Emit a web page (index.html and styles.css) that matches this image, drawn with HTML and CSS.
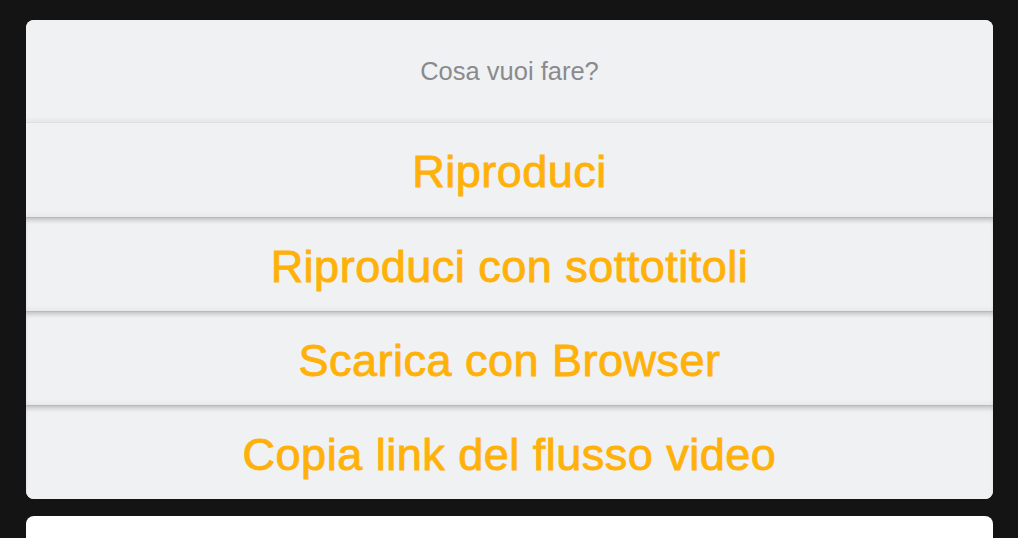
FILE: index.html
```html
<!DOCTYPE html>
<html lang="it">
<head>
  <meta charset="UTF-8">
  <title>Azioni video</title>
  <link rel="stylesheet" href="styles.css">
</head>
<body>

  <!-- Foglio azioni -->
  <div class="action-sheet">
    <div class="sheet-title">Cosa vuoi fare?</div>
    <button class="sheet-btn">Riproduci</button>
    <button class="sheet-btn">Riproduci con sottotitoli</button>
    <button class="sheet-btn">Scarica con Browser</button>
    <button class="sheet-btn">Copia link del flusso video</button>
  </div>

  <!-- Annulla (tagliato in basso) -->
  <div class="cancel-card"></div>

</body>
</html>
```

FILE: styles.css
```css
body {
  margin: 0;
  padding: 20px 25px 0 26px;
  background: #141414;
  font-family: "Liberation Sans", Arial, sans-serif;
}

.action-sheet {
  display: flex;
  flex-direction: column;
  background: #f0f1f3;
  border-radius: 8px;
  overflow: hidden;
}

.sheet-title {
  height: 103px;
  display: flex;
  align-items: center;
  justify-content: center;
  font-size: 25.5px;
  color: #8a8a8e;
  padding-top: 1px;
  box-sizing: border-box;
  background: linear-gradient(to bottom, #f0f1f3 95%, #e5e6e8 100%);
  border-bottom: 1px solid #dfe0e2;
}

.sheet-btn {
  box-sizing: border-box;
  height: 94px;
  border: none;
  margin: 0;
  padding: 4px 0 0;
  background: #f0f1f3;
  font-family: inherit;
  font-size: 45px;
  color: #ffb10a;
  -webkit-text-stroke: 0.9px #ffb10a;
  letter-spacing: 0.5px;
  cursor: pointer;
}

.sheet-btn + .sheet-btn {
  border-top: 1px solid #b8b9bc;
  background: linear-gradient(to bottom, #f0f1f3 94%, #e8e9eb 100%);
  box-shadow: inset 0 4px 5px -2px rgba(0, 0, 0, 0.22);
}

.sheet-title + .sheet-btn {
  background: linear-gradient(to bottom, #f0f1f3 94%, #e8e9eb 100%);
}

.sheet-btn:last-child {
  background: #f0f1f3;
}

.cancel-card {
  margin-top: 17px;
  height: 22px;
  background: #ffffff;
  border-radius: 8px 8px 0 0;
}
```
